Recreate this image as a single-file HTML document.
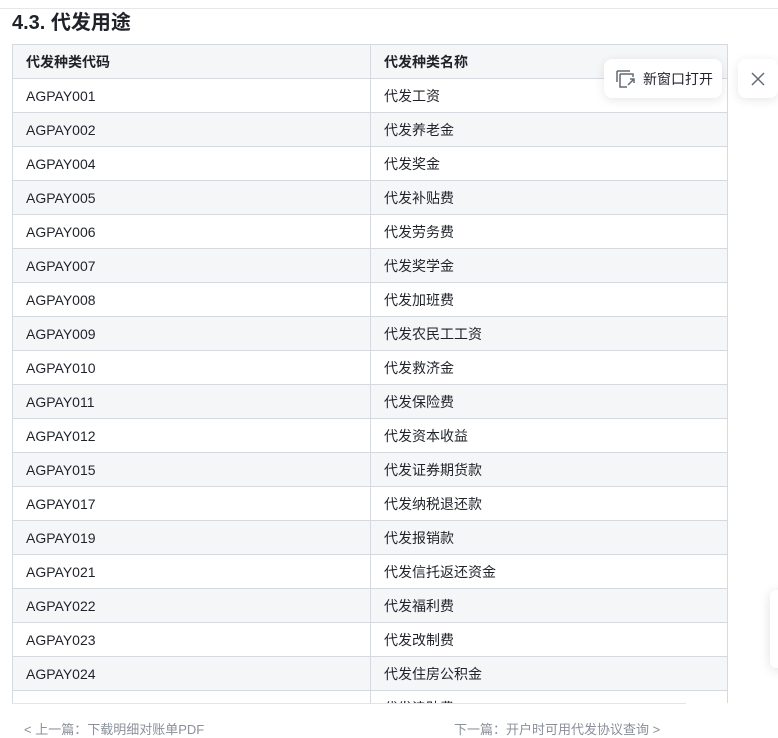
<!DOCTYPE html>
<html><head><meta charset="utf-8"><style>
body{margin:0;width:778px;height:726px;overflow:hidden;background:#fff;font-family:"Liberation Sans","Noto Sans CJK SC",sans-serif;position:relative}
.topline{position:absolute;left:0;top:8px;width:778px;border-top:1px solid #e5e7eb}
h3{position:absolute;left:12px;top:9px;margin:0;font-size:20px;font-weight:bold;color:#1f2329;line-height:28px}
.wrap{position:absolute;left:12px;top:44px;width:716px;height:659px;overflow:hidden}
table{border-collapse:collapse;width:716px;font-size:14px;color:#1f2329}
td,th{border:1px solid #d5d9e0;height:34px;padding:0 0 0 13px;text-align:left;box-sizing:border-box}
tr{height:34px}
th{background:#f5f6f8;font-weight:bold}
td:first-child,th:first-child{width:358px}
tr:nth-child(odd) td{background:#f5f6f8}
.btm{position:absolute;left:12px;top:703px;width:674px;border-top:1px solid #e2e4e8;background:#fff;height:23px}
.foot{position:absolute;top:719px;font-size:13px;color:#8a8f99}
.pop{position:absolute;left:604px;top:59px;width:118px;height:39px;background:#fff;border-radius:8px;box-shadow:0 2px 10px rgba(0,0,0,.1);font-size:14px;color:#1f2329}
.x{position:absolute;left:738px;top:59px;width:40px;height:39px;background:#fff;border-radius:8px;box-shadow:0 2px 10px rgba(0,0,0,.1)}
.card{position:absolute;left:770px;top:590px;width:20px;height:78px;background:#fff;border-radius:6px;box-shadow:0 2px 12px rgba(0,0,0,.12)}
</style></head><body>
<div class="topline"></div>
<h3>4.3. 代发用途</h3>
<div class="wrap"><table>
<tr><th>代发种类代码</th><th>代发种类名称</th></tr>
<tr><td>AGPAY001</td><td>代发工资</td></tr>
<tr><td>AGPAY002</td><td>代发养老金</td></tr>
<tr><td>AGPAY004</td><td>代发奖金</td></tr>
<tr><td>AGPAY005</td><td>代发补贴费</td></tr>
<tr><td>AGPAY006</td><td>代发劳务费</td></tr>
<tr><td>AGPAY007</td><td>代发奖学金</td></tr>
<tr><td>AGPAY008</td><td>代发加班费</td></tr>
<tr><td>AGPAY009</td><td>代发农民工工资</td></tr>
<tr><td>AGPAY010</td><td>代发救济金</td></tr>
<tr><td>AGPAY011</td><td>代发保险费</td></tr>
<tr><td>AGPAY012</td><td>代发资本收益</td></tr>
<tr><td>AGPAY015</td><td>代发证券期货款</td></tr>
<tr><td>AGPAY017</td><td>代发纳税退还款</td></tr>
<tr><td>AGPAY019</td><td>代发报销款</td></tr>
<tr><td>AGPAY021</td><td>代发信托返还资金</td></tr>
<tr><td>AGPAY022</td><td>代发福利费</td></tr>
<tr><td>AGPAY023</td><td>代发改制费</td></tr>
<tr><td>AGPAY024</td><td>代发住房公积金</td></tr>
<tr><td>AGPAY025</td><td>代发津贴费</td></tr>
</table></div>
<div class="btm"></div>
<div class="foot" style="left:24px">&lt; 上一篇：下载明细对账单PDF</div>
<div class="foot" style="left:454px">下一篇：开户时可用代发协议查询 &gt;</div>
<div class="pop">
<svg style="position:absolute;left:12px;top:11px" width="20" height="18" viewBox="0 0 20 18" fill="none" stroke="#646a73" stroke-width="1.5"><path d="M1 1h13M1 1v11M4 4h13v3M4 4v13h7"/><path d="M12 15l6-6M14 9h4v4"/></svg>
<span style="position:absolute;left:39px;top:10px">新窗口打开</span></div>
<div class="x"><svg style="position:absolute;left:13px;top:13px" width="14" height="14" viewBox="0 0 14 14" stroke="#646a73" stroke-width="1.5"><path d="M1 1l12 12M13 1L1 13"/></svg></div>
<div class="card"></div>
</body></html>
